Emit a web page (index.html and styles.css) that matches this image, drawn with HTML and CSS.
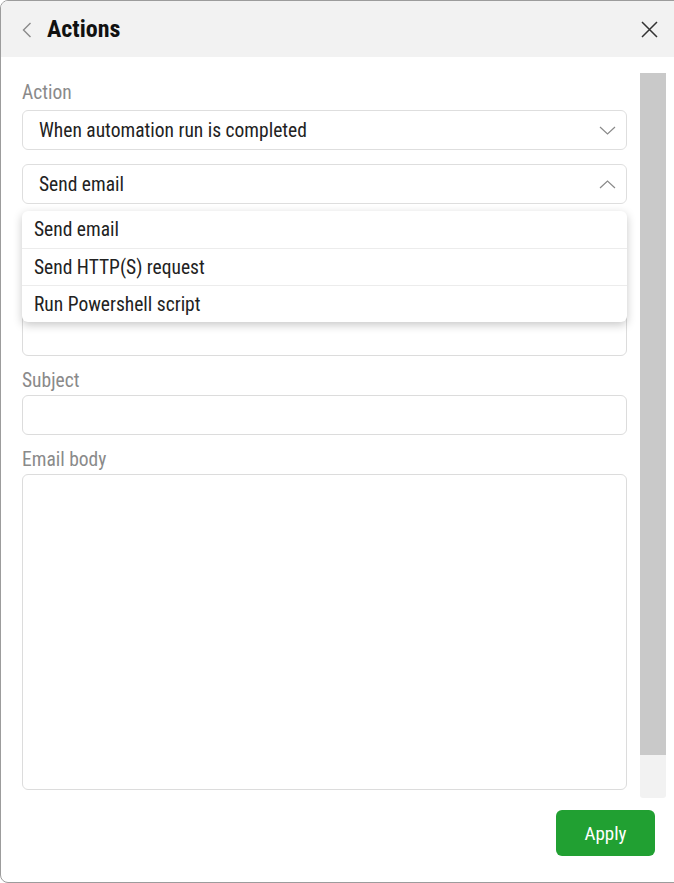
FILE: index.html
```html
<!DOCTYPE html>
<html lang="en">
<head>
    <meta charset="UTF-8">
    <meta name="viewport" content="width=device-width, initial-scale=1.0">
    <title>Actions</title>
    <link rel="stylesheet" href="styles.css">
</head>
<body>
    <div class="dialog">
        <div class="header">
            <svg class="back" width="10" height="16" viewBox="0 0 10 16"><path d="M8.5 1 L1.5 8 L8.5 15" fill="none" stroke="#8a8a8a" stroke-width="1.4"/></svg>
            <h1>Actions</h1>
            <svg class="close" width="17" height="17" viewBox="0 0 17 17"><path d="M1 1 L16 16 M16 1 L1 16" fill="none" stroke="#333" stroke-width="1.5"/></svg>
        </div>
        <div class="main">
            <div class="form">
                <div class="field first">
                    <label>Action</label>
                    <div class="select">
                        <span>When automation run is completed</span>
                        <svg width="17" height="9" viewBox="0 0 17 9"><path d="M1 1 L8.5 8 L16 1" fill="none" stroke="#8a8a8a" stroke-width="1.2"/></svg>
                    </div>
                </div>
                <div class="field dropdown-wrap">
                    <div class="select">
                        <span>Send email</span>
                        <svg width="17" height="9" viewBox="0 0 17 9"><path d="M1 8 L8.5 1 L16 8" fill="none" stroke="#8a8a8a" stroke-width="1.2"/></svg>
                    </div>
                    <ul class="menu">
                        <li>Send email</li>
                        <li>Send HTTP(S) request</li>
                        <li>Run Powershell script</li>
                    </ul>
                </div>
                <div class="field">
                    <textarea class="box recipients"></textarea>
                </div>
                <div class="field">
                    <label>Subject</label>
                    <input class="box" type="text">
                </div>
                <div class="field">
                    <label>Email body</label>
                    <textarea class="box email-body"></textarea>
                </div>
            </div>
            <div class="scrollbar"><div class="thumb"></div></div>
        </div>
        <div class="footer">
            <button class="apply">Apply</button>
        </div>
    </div>
</body>
</html>
```

FILE: styles.css
```css
body {
    margin: 0;
    overflow: hidden;
    background-color: white;
    font-family: "Roboto Condensed", Roboto, "Liberation Sans", sans-serif;
}
.dialog {
    width: 682px;
    height: 883px;
    box-sizing: border-box;
    border: 1px solid #9c9c9c;
    border-radius: 8px;
    overflow: hidden;
    display: flex;
    flex-direction: column;
    background-color: white;
}
.header {
    height: 56px;
    flex-shrink: 0;
    background-color: #f2f2f2;
    display: flex;
    align-items: center;
    padding: 0 23px 0 21px;
}
.back {
    margin-top: 1px;
}
.header h1 {
    margin: 0 0 0 15px;
    font-size: 24px;
    font-weight: bold;
    color: #111;
}
.close {
    margin-left: auto;
    margin-top: 1px;
}
.main {
    flex: 1;
    display: flex;
    padding-top: 16px;
    min-height: 0;
}
.form {
    width: 605px;
    margin-left: 21px;
    padding-top: 9px;
}
.field {
    margin-top: 14px;
}
.form .field:first-child {
    margin-top: 0;
}
label {
    display: block;
    font-size: 19.5px;
    line-height: 22px;
    color: #8a8a8a;
    margin-bottom: 3px;
}
.field.first label {
    margin-bottom: 6px;
}
.select {
    height: 40px;
    box-sizing: border-box;
    border: 1px solid #dedede;
    border-radius: 6px;
    padding: 0 10px 0 16px;
    display: flex;
    align-items: center;
    justify-content: space-between;
    font-size: 19.5px;
    color: #222;
}
.dropdown-wrap {
    position: relative;
}
.menu {
    position: absolute;
    top: 47px;
    left: 0;
    right: 0;
    margin: 0;
    padding: 0;
    list-style: none;
    background-color: white;
    border-radius: 6px;
    box-shadow: 0 3px 10px rgba(0, 0, 0, 0.22);
    z-index: 2;
}
.menu li {
    height: 37px;
    line-height: 37px;
    padding-left: 12px;
    font-size: 19.5px;
    color: #222;
}
.menu li + li {
    height: 36px;
    border-top: 1px solid #ececec;
}
.box {
    display: block;
    width: 100%;
    box-sizing: border-box;
    height: 40px;
    border: 1px solid #dcdcdc;
    border-radius: 6px;
    font-family: inherit;
    font-size: 19.5px;
    resize: none;
    outline: none;
}
.recipients {
    height: 138px;
}
.email-body {
    height: 316px;
}
.scrollbar {
    width: 26px;
    margin-left: 13px;
    background-color: #f2f2f2;
    border-radius: 0 0 3px 3px;
}
.thumb {
    height: 682px;
    background-color: #c9c9c9;
}
.footer {
    flex-shrink: 0;
    display: flex;
    justify-content: flex-end;
    padding: 12px 26px 26px 0;
}
.apply {
    width: 99px;
    height: 46px;
    border: none;
    border-radius: 6px;
    background-color: #21a032;
    color: white;
    font-family: inherit;
    font-size: 19px;
    cursor: pointer;
}
```
